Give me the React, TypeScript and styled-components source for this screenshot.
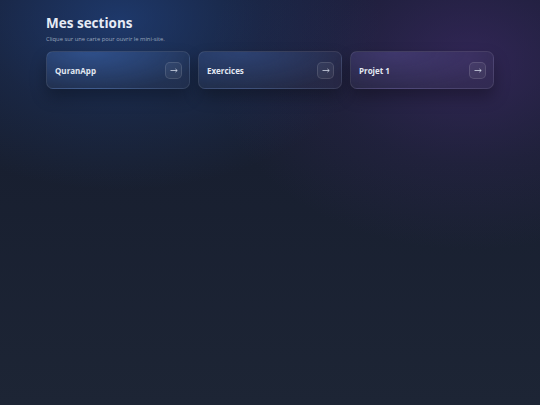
import React from "react";
import styled, { createGlobalStyle } from "styled-components";

const Global = createGlobalStyle`
  html, body { margin: 0; padding: 0; height: 100%; }
  body {
    font-family: "Open Sans", "Noto Sans", sans-serif;
    background: #1b2333;
  }
  #root { min-height: 100%; }
`;

const Page = styled.div`
  width: 540px;
  height: 405px;
  box-sizing: border-box;
  padding: 14px 46px 0;
  background:
    radial-gradient(ellipse 260px 170px at 120px 20px, rgba(35, 75, 145, 0.6), rgba(35, 75, 145, 0.2) 55%, transparent 100%),
    radial-gradient(ellipse 260px 190px at 470px 60px, rgba(70, 45, 115, 0.55), rgba(70, 45, 115, 0.18) 55%, transparent 100%),
    linear-gradient(180deg, #161c30 0%, #181f30 40%, #1d2535 100%);
`;

const Title = styled.h1`
  margin: 0;
  font-size: 13.5px;
  line-height: 18px;
  font-weight: 700;
  color: #e6ebf5;
`;

const Subtitle = styled.p`
  margin: 3px 0 0;
  font-size: 5.8px;
  line-height: 8px;
  color: #9aa6bd;
`;

const Grid = styled.div`
  display: grid;
  grid-template-columns: repeat(3, 1fr);
  gap: 8px;
  margin-top: 8px;
`;

const Card = styled.div<{ $tint: string }>`
  height: 38px;
  box-sizing: border-box;
  border-radius: 7px;
  border: 1px solid rgba(255, 255, 255, 0.09);
  background:
    radial-gradient(ellipse 80% 110% at 30% 0%, ${(p) => p.$tint}, transparent 100%),
    rgba(255, 255, 255, 0.03);
  box-shadow: 0 8px 16px rgba(0, 0, 0, 0.3);
  display: flex;
  align-items: center;
  justify-content: space-between;
  padding: 0 7px 0 8px;
`;

const CardTitle = styled.span`
  font-size: 8px;
  font-weight: 700;
  color: #e3e8f2;
`;

const ArrowBtn = styled.span`
  width: 17px;
  height: 17px;
  box-sizing: border-box;
  border-radius: 5px;
  border: 1px solid rgba(255, 255, 255, 0.12);
  background: rgba(255, 255, 255, 0.06);
  display: flex;
  align-items: center;
  justify-content: center;
  color: #cfd6e4;
`;

const Arrow = () => (
  <svg width="8" height="5" viewBox="0 0 8 5" fill="none" stroke="#cfd6e4" strokeWidth="0.8">
    <path d="M0.5 2.5H7.2M5.4 0.9L7.2 2.5L5.4 4.1" />
  </svg>
);

const sections = [
  { name: "QuranApp", tint: "rgba(55, 95, 165, 0.6)" },
  { name: "Exercices", tint: "rgba(55, 85, 150, 0.5)" },
  { name: "Projet 1", tint: "rgba(80, 70, 140, 0.5)" },
];

export default function App() {
  return (
    <>
      <Global />
      <Page>
        <Title>Mes sections</Title>
        <Subtitle>Clique sur une carte pour ouvrir le mini-site.</Subtitle>
        <Grid>
          {sections.map((s) => (
            <Card key={s.name} $tint={s.tint}>
              <CardTitle>{s.name}</CardTitle>
              <ArrowBtn>
                <Arrow />
              </ArrowBtn>
            </Card>
          ))}
        </Grid>
      </Page>
    </>
  );
}
